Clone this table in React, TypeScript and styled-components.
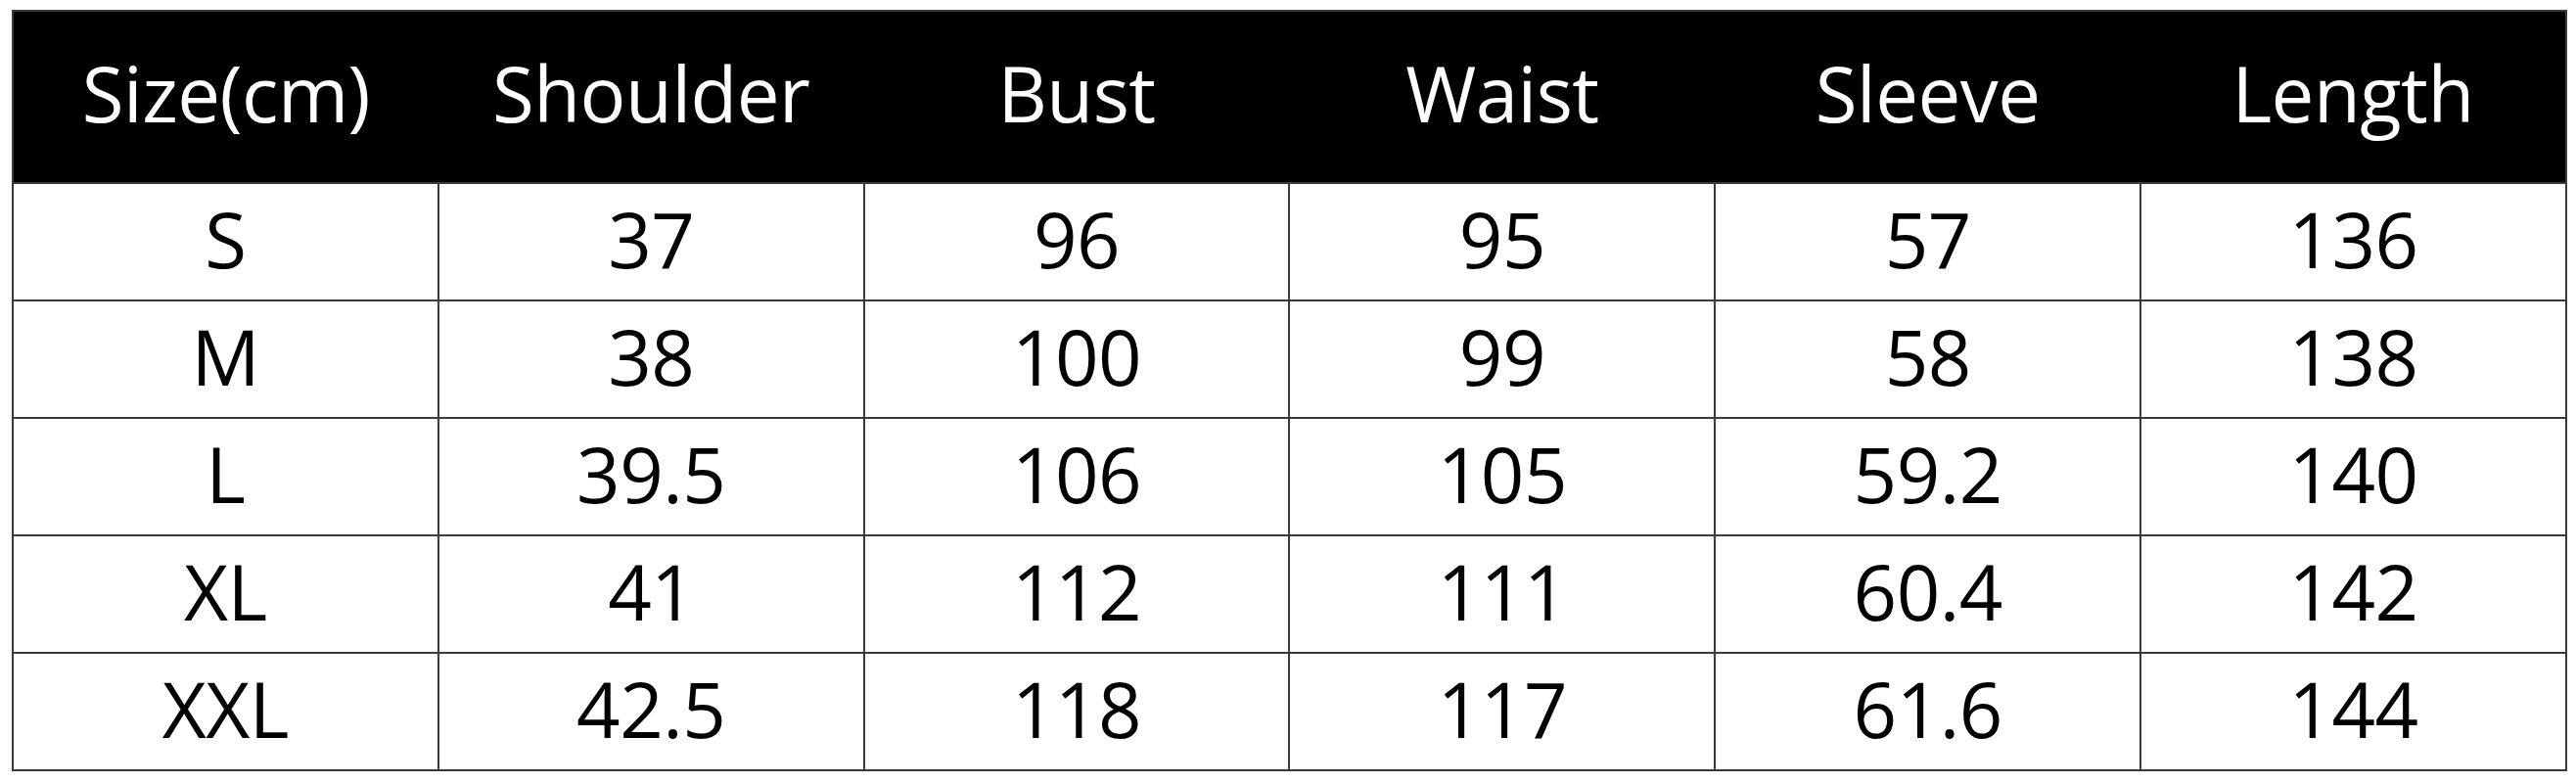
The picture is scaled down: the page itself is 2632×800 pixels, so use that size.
import React from "react";
import styled, { createGlobalStyle } from "styled-components";

const Global = createGlobalStyle`
  html, body { margin: 0; padding: 0; background: #ffffff; }
  body { font-family: "Open Sans", "Noto Sans", sans-serif; }
`;

const Page = styled.div`
  padding: 10px 0 0 12px;
`;

const Table = styled.table`
  width: 2611px;
  border-collapse: collapse;
  table-layout: fixed;
  border: 2px solid #3a3a3a;
`;

const HeadRow = styled.tr`
  height: 176px;
  background: #000000;
`;

const HeadCell = styled.th`
  color: #ffffff;
  font-weight: 400;
  font-size: 78px;
  text-align: center;
  vertical-align: middle;
  padding: 0 0 8px 0;
  letter-spacing: -0.5px;
`;

const Row = styled.tr`
  height: 120px;
`;

const Cell = styled.td`
  border: 2px solid #3a3a3a;
  color: #000000;
  font-size: 78px;
  text-align: center;
  vertical-align: middle;
  padding: 0 0 6px 0;
  letter-spacing: -0.5px;
`;

const headers = ["Size(cm)", "Shoulder", "Bust", "Waist", "Sleeve", "Length"];
const rows = [
  ["S", "37", "96", "95", "57", "136"],
  ["M", "38", "100", "99", "58", "138"],
  ["L", "39.5", "106", "105", "59.2", "140"],
  ["XL", "41", "112", "111", "60.4", "142"],
  ["XXL", "42.5", "118", "117", "61.6", "144"],
];

export default function App() {
  return (
    <>
      <Global />
      <Page>
        <Table>
          <thead>
            <HeadRow>
              {headers.map((h) => (
                <HeadCell key={h}>{h}</HeadCell>
              ))}
            </HeadRow>
          </thead>
          <tbody>
            {rows.map((r) => (
              <Row key={r[0]}>
                {r.map((c, i) => (
                  <Cell key={i}>{c}</Cell>
                ))}
              </Row>
            ))}
          </tbody>
        </Table>
      </Page>
    </>
  );
}
